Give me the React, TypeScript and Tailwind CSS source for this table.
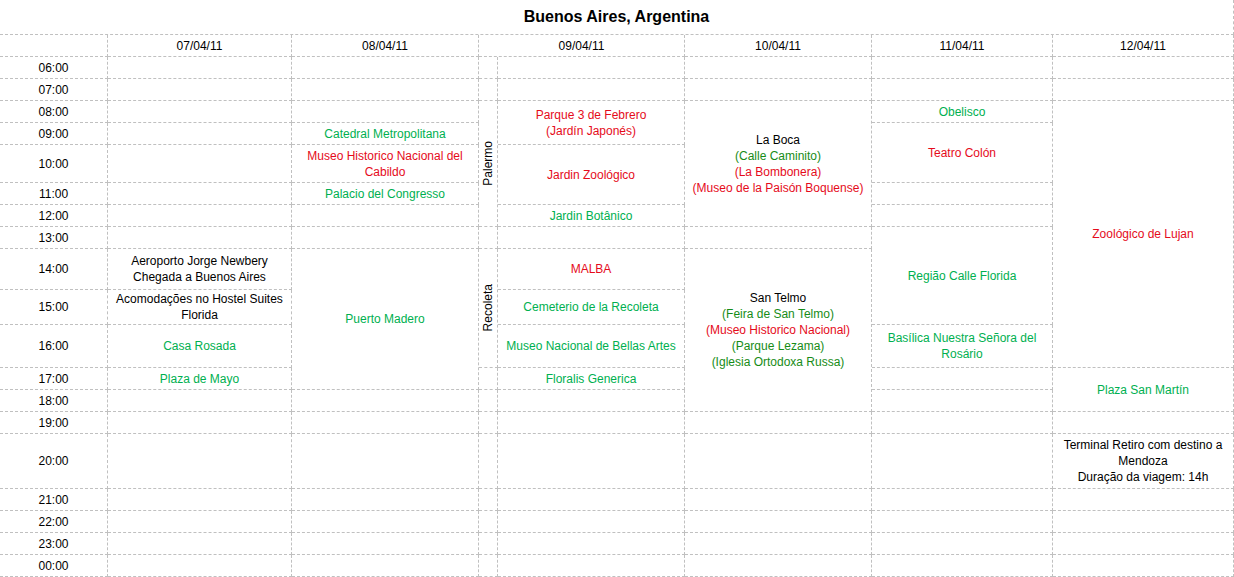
import React from 'react';

type Line = { t: string; c?: string };
type Cell = { span?: string; lines?: Line[]; vertical?: string };

const GREEN = 'text-[#00b050]';
const DARK = 'text-[#178c17]';
const RED = 'text-[#e50b1b]';
const BLACK = 'text-black';

const E: Cell = {};
const empties = (n: number): Cell[] => Array.from({ length: n }, () => E);
const one = (t: string, c = BLACK): Cell => ({ lines: [{ t, c }] });

const times = [
  '06:00', '07:00', '08:00', '09:00', '10:00', '11:00', '12:00', '13:00', '14:00', '15:00',
  '16:00', '17:00', '18:00', '19:00', '20:00', '21:00', '22:00', '23:00', '00:00',
];

const columns: Cell[][] = [
  [E, ...times.map((t) => one(t))],
  [
    one('07/04/11'),
    ...empties(8),
    { lines: [{ t: 'Aeroporto Jorge Newbery' }, { t: 'Chegada a Buenos Aires' }] },
    one('Acomodações no Hostel Suites Florida'),
    one('Casa Rosada', GREEN),
    one('Plaza de Mayo', GREEN),
    ...empties(7),
  ],
  [
    one('08/04/11'),
    ...empties(3),
    one('Catedral Metropolitana', GREEN),
    one('Museo Historico Nacional del Cabildo', RED),
    one('Palacio del Congresso', GREEN),
    ...empties(2),
    { span: 'row-span-4', lines: [{ t: 'Puerto Madero', c: GREEN }] },
    ...empties(7),
  ],
  [
    ...empties(2),
    { span: 'row-span-5', vertical: 'Palermo' },
    E,
    { span: 'row-span-3', vertical: 'Recoleta' },
    ...empties(8),
  ],
  [
    ...empties(2),
    { span: 'row-span-2', lines: [{ t: 'Parque 3 de Febrero', c: RED }, { t: '(Jardín Japonés)', c: RED }] },
    { span: 'row-span-2', lines: [{ t: 'Jardin Zoológico', c: RED }] },
    one('Jardin Botânico', GREEN),
    E,
    one('MALBA', RED),
    one('Cemeterio de la Recoleta', GREEN),
    one('Museo Nacional de Bellas Artes', GREEN),
    one('Floralis Generica', GREEN),
    ...empties(7),
  ],
  [
    one('10/04/11'),
    ...empties(2),
    {
      span: 'row-span-5',
      lines: [
        { t: 'La Boca' },
        { t: '(Calle Caminito)', c: DARK },
        { t: '(La Bombonera)', c: RED },
        { t: '(Museo de la Paisón Boquense)', c: RED },
      ],
    },
    E,
    {
      span: 'row-span-5',
      lines: [
        { t: 'San Telmo' },
        { t: '(Feira de San Telmo)', c: DARK },
        { t: '(Museo Historico Nacional)', c: RED },
        { t: '(Parque Lezama)', c: DARK },
        { t: '(Iglesia Ortodoxa Russa)', c: DARK },
      ],
    },
    ...empties(6),
  ],
  [
    one('11/04/11'),
    ...empties(2),
    one('Obelisco', GREEN),
    { span: 'row-span-2', lines: [{ t: 'Teatro Colón', c: RED }] },
    ...empties(2),
    { span: 'row-span-3', lines: [{ t: 'Região Calle Florida', c: GREEN }] },
    one('Basílica Nuestra Señora del Rosário', GREEN),
    ...empties(8),
  ],
  [
    one('12/04/11'),
    ...empties(2),
    { span: 'row-span-9', lines: [{ t: 'Zoológico de Lujan', c: RED }] },
    { span: 'row-span-2', lines: [{ t: 'Plaza San Martín', c: GREEN }] },
    E,
    { lines: [{ t: 'Terminal Retiro com destino a Mendoza' }, { t: 'Duração da viagem: 14h' }] },
    ...empties(4),
  ],
];

const border = 'border-r border-b border-dashed border-[#c0c0c0]';

const GridCell: React.FC<{ cell: Cell }> = ({ cell }) => (
  <div className={`${cell.span ?? ''} ${border} flex flex-col items-center justify-center px-[2px] text-center`}>
    {cell.vertical && <span className="rotate-180 [writing-mode:vertical-rl]">{cell.vertical}</span>}
    {cell.lines?.map((l, i) => (
      <span key={i} className={l.c ?? BLACK}>
        {l.t}
      </span>
    ))}
  </div>
);

export default function App() {
  return (
    <div className="w-[1234px] h-[577px] bg-white font-['Liberation_Sans',Arial,sans-serif] text-[12px] leading-[16px] text-black">
      <div className="grid grid-flow-col grid-cols-[108px_184px_187px_19px_187px_187px_181px_181px] grid-rows-[35px_22px_22px_22px_22px_22px_38px_22px_22px_22px_41px_35px_43px_22px_22px_22px_55px_22px_22px_22px_22px]">
        <div className={`col-start-1 col-span-8 row-start-1 ${border} flex items-center justify-center text-[16px] font-bold`}>
          Buenos Aires, Argentina
        </div>
        <div className={`col-start-4 col-span-2 row-start-2 ${border} flex items-center justify-center`}>
          09/04/11
        </div>
        {columns.map((col, ci) => col.map((cell, ri) => <GridCell key={`${ci}-${ri}`} cell={cell} />))}
      </div>
    </div>
  );
}
